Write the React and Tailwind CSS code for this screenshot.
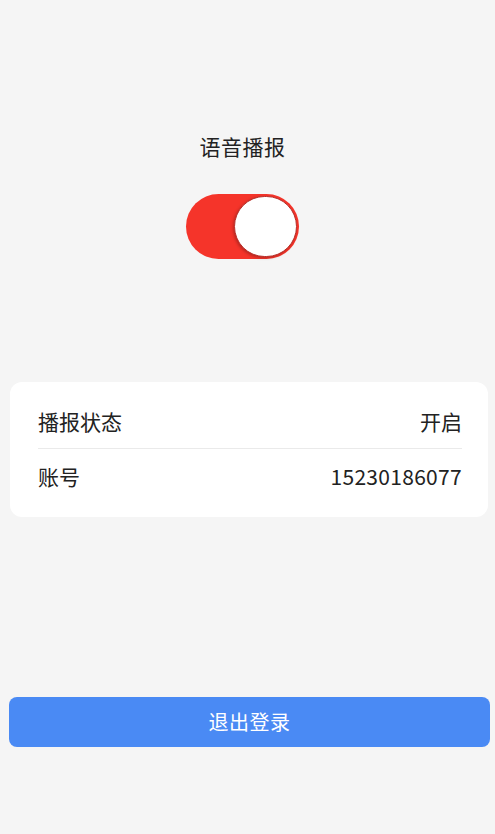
import React, { useState } from "react";

const font = { fontFamily: '"Noto Sans CJK SC", "Noto Sans", sans-serif' };

export default function App() {
  const [on, setOn] = useState(true);

  return (
    <div className="min-h-[834px] bg-[#f5f5f5] flex flex-col text-[#222]" style={font}>
      <div className="pt-[131px] pr-[10px] flex flex-col items-center">
        <div className="text-[21px] leading-[30px] tracking-[0.5px]">语音播报</div>
        <button
          onClick={() => setOn(!on)}
          className={`mt-[33px] w-[113px] h-[65px] rounded-full p-[2px] flex items-center ${on ? "bg-[#f5342a] justify-end" : "bg-[#ddd] justify-start"}`}
        >
          <span className="block w-[63px] h-[61px] rounded-full bg-white border border-[#b8302a] shadow-[-1px_1px_3px_rgba(0,0,0,0.25)]" />
        </button>
      </div>

      <div className="mt-[123px] ml-[10px] mr-[7px] bg-white rounded-[12px] pl-[28px] pr-[26px] pt-[24px] pb-[26px]">
        <div className="flex justify-between items-center text-[21px] leading-[30px] pb-[12px] border-b border-[#eaeaea]">
          <span>播报状态</span>
          <span>{on ? "开启" : "关闭"}</span>
        </div>
        <div className="flex justify-between items-center text-[21px] leading-[30px] pt-[12px]">
          <span>账号</span>
          <span className="tracking-[0.3px]">15230186077</span>
        </div>
      </div>

      <button className="mt-[180px] ml-[9px] mr-[5px] h-[50px] rounded-[8px] bg-[#4a8af4] text-white text-[20px] tracking-[0.5px]">
        退出登录
      </button>
    </div>
  );
}
